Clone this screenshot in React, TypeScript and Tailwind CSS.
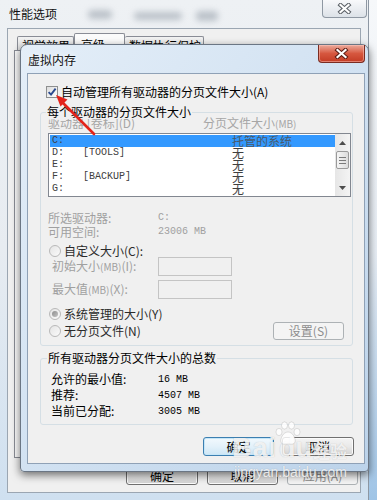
import React from "react";

function XGlyph({ outline }: { outline: string }) {
  return (
    <svg width="15" height="11" viewBox="0 0 15 11">
      <path d="M3.5 2 L11.5 9 M11.5 2 L3.5 9" stroke={outline} strokeWidth="4.2" strokeLinecap="square" fill="none" />
      <path d="M3.5 2 L11.5 9 M11.5 2 L3.5 9" stroke="#ffffff" strokeWidth="2.2" strokeLinecap="square" fill="none" />
    </svg>
  );
}

function Radio({ checked }: { checked?: boolean }) {
  return (
    <div className="w-[12px] h-[12px] shrink-0 rounded-full border border-[#b9b9b9] bg-linear-to-br from-[#e4e4e4] to-[#fbfbfb] flex items-center justify-center">
      {checked && <div className="w-[6px] h-[6px] rounded-full bg-linear-to-br from-[#8d8d8d] to-[#c4c4c4]" />}
    </div>
  );
}

function Btn({ children, w, kind }: { children: React.ReactNode; w: string; kind?: "default" | "disabled" | "normal" }) {
  if (kind === "default") {
    return (
      <div className={`${w} h-[19px] rounded-[3px] border border-[#3c7fb1] bg-linear-to-b from-[#f2f9fd] via-[#e3f1fa] to-[#cde6f5] shadow-[inset_0_0_0_1px_#c5e6f8] flex items-center justify-center leading-none text-[12px] text-black`}>
        {children}
      </div>
    );
  }
  if (kind === "disabled") {
    return (
      <div className={`${w} h-[19px] rounded-[3px] border border-[#adb2b5] bg-[#f4f4f4] flex items-center justify-center leading-none text-[12px] text-[#8c8c8c]`}>
        {children}
      </div>
    );
  }
  return (
    <div className={`${w} h-[19px] rounded-[3px] border border-[#707070] bg-linear-to-b from-[#f4f4f4] via-[#e9e9e9] to-[#d3d3d3] shadow-[inset_0_0_0_1px_#fbfbfb] flex items-center justify-center leading-none text-[12px] text-black`}>
      {children}
    </div>
  );
}

const rows = [
  { d: "C:", l: "", s: "托管的系统", sel: true },
  { d: "D:", l: "[TOOLS]", s: "无" },
  { d: "E:", l: "", s: "无" },
  { d: "F:", l: "[BACKUP]", s: "无" },
  { d: "G:", l: "", s: "无" },
];

export default function App() {
  return (
    <div className="relative w-[377px] h-[500px] overflow-hidden bg-linear-to-b from-[#f6f8fa] via-[#e8eef5] to-[#9fc4e6] font-['Noto_Sans_CJK_SC','Noto_Sans',sans-serif] text-[12px] text-black">
      {/* Outer window: 性能选项 */}
      <div className="w-[369px] h-[500px] flex flex-col bg-linear-to-b from-[#eef1f4] via-[#e7ecf1] to-[#cfe0f0] border-r border-[#8d97a3]">
        <div className="relative h-[28px] flex items-start justify-between">
          <span className="mt-[6px] ml-[9px] leading-[16px] text-[12px] text-[#111]">性能选项</span>
          <div className="absolute left-[88px] top-[10px] w-[24px] h-[9px] rounded bg-[#9aa3ad] blur-[3px] opacity-60" />
          <div className="absolute left-[134px] top-[12px] w-[48px] h-[8px] rounded bg-[#9aa3ad] blur-[3px] opacity-60" />
          <div className="absolute left-[196px] top-[11px] w-[22px] h-[10px] rounded bg-[#9aa3ad] blur-[3px] opacity-60" />
          <div className="mr-[1px] w-[45px] h-[18px] rounded-b-[4px] border border-t-0 border-[#8f98a3] bg-linear-to-b from-[#f8f9fb] to-[#dde2e8] flex items-center justify-center">
            <XGlyph outline="#5b6066" />
          </div>
        </div>
        <div className="flex-1 mx-[7px] flex flex-col bg-[#f0f0f0] border border-[#9ba6b2] pl-[6px] pr-[2px] pt-[4px] pb-[7px]">
          <div className="flex items-end h-[17px] pl-[3px]">
            <div className="w-[57px] h-[14px] border border-b-0 border-[#898c95] rounded-t-[2px] bg-linear-to-b from-[#f3f3f3] to-[#e0e0e0] pl-[4px] pt-[2px] leading-[14px] overflow-hidden">视觉效果</div>
            <div className="w-[51px] h-[17px] border border-b-0 border-[#898c95] rounded-t-[2px] bg-[#fbfbfb] pl-[6px] pt-[4px] leading-[14px] overflow-hidden">高级</div>
            <div className="w-[79px] h-[14px] border border-b-0 border-l-0 border-[#898c95] rounded-t-[2px] bg-linear-to-b from-[#f3f3f3] to-[#e0e0e0] pl-[4px] pt-[2px] leading-[14px] overflow-hidden">数据执行保护</div>
          </div>
          <div className="h-[408px] bg-[#fafafa] border border-[#898c95]" />
          <div className="mt-[8px] flex justify-end gap-[9px]">
            <Btn w="w-[72px]">确定</Btn>
            <Btn w="w-[71px]">取消</Btn>
            <Btn w="w-[71px]" kind="disabled">应用(A)</Btn>
          </div>
        </div>
        <div className="h-[7px]" />
      </div>

      {/* Inner dialog: 虚拟内存 */}
      <div className="absolute left-[20px] top-[44px] w-[349px] h-[428px] flex flex-col rounded-t-[7px] rounded-b-[4px] border border-[#6b7684] bg-linear-to-br from-[#e4eef8] via-[#d2e2f2] to-[#bcd3ea] shadow-[0_3px_9px_rgba(0,0,0,0.55)]">
        <div className="h-[28px] flex justify-between">
          <span className="self-center ml-[7px] mt-[1px] leading-[16px] text-[12px] text-[#111] [text-shadow:0_0_6px_#ffffff]">虚拟内存</span>
          <div className="mr-[3px] w-[47px] h-[18px] rounded-b-[4px] border border-t-0 border-[#7a2c22] bg-linear-to-b from-[#eaa99b] via-[#d6573f] to-[#c33b24] shadow-[inset_0_0_0_1px_rgba(255,200,190,0.5)] flex items-center justify-center">
            <XGlyph outline="#5a1d15" />
          </div>
        </div>
        <div className="ml-[6px] mr-[3px] h-[391px] bg-[#f0f0f0] border border-[#8fa1b6] flex flex-col">
          {/* checkbox */}
          <div className="mt-[12px] ml-[18px] h-[12px] flex items-center gap-[3px]">
            <div className="w-[12px] h-[12px] border border-[#8e8f8f] bg-linear-to-br from-[#dcdcdc] to-[#ffffff] flex items-center justify-center">
              <svg width="10" height="10" viewBox="0 0 10 10">
                <path d="M1.6 5.2 L4 7.6 L8.6 1.6" stroke="#2b4a8f" strokeWidth="1.9" fill="none" />
              </svg>
            </div>
            <span className="leading-[14px]">自动管理所有驱动器的分页文件大小(A)</span>
          </div>

          {/* group 1 */}
          <div className="relative mt-[14px] ml-[12px] w-[313px] rounded-[3px] border border-[#d5dfe5] pt-[3px] pl-[7px] pb-[5px] flex flex-col">
            <span className="absolute -top-[8px] left-[5px] px-[1px] bg-[#f0f0f0] leading-[14px]">每个驱动器的分页文件大小</span>
            <div className="h-[14px] flex leading-[14px] text-[#a6a6a6]">
              <span className="w-[155px]">驱动器 [卷标](D)</span>
              <span>分页文件大小<span className="text-[10px]">(MB)</span></span>
            </div>
            <div className="mt-[3px] w-[303px] h-[64px] border border-[#828790] bg-white flex">
              <div className="flex-1 pl-[1px] pt-[1px] flex flex-col">
                {rows.map((r) => (
                  <div key={r.d} className={`h-[12px] flex items-center leading-[12px] text-[#404040] ${r.sel ? "bg-[#3399ff]" : ""}`}>
                    <span className="w-[33px] pl-[2px] font-['Liberation_Mono',monospace] text-[10px]">{r.d}</span>
                    <span className="w-[149px] font-['Liberation_Mono',monospace] text-[10px]">{r.l}</span>
                    <span className={`text-[12px] ${r.sel ? "text-[#4a5a6a]" : ""}`}>{r.s}</span>
                  </div>
                ))}
              </div>
              <div className="w-[15px] flex flex-col bg-linear-to-r from-[#e6e6e6] to-[#f4f4f4]">
                <div className="h-[17px] flex items-center justify-center">
                  <svg width="7" height="4" viewBox="0 0 7 4"><path d="M0 4 L3.5 0 L7 4 Z" fill="#4d4d4d" /></svg>
                </div>
                <div className="mx-[1px] h-[18px] rounded-[2px] border border-[#9a9a9a] bg-linear-to-r from-[#f5f5f5] to-[#dcdcdc] flex flex-col items-center justify-center gap-[2px]">
                  <div className="w-[7px] h-[1px] bg-[#7a7a7a]" />
                  <div className="w-[7px] h-[1px] bg-[#7a7a7a]" />
                  <div className="w-[7px] h-[1px] bg-[#7a7a7a]" />
                </div>
                <div className="flex-1" />
                <div className="h-[17px] flex items-center justify-center">
                  <svg width="7" height="4" viewBox="0 0 7 4"><path d="M0 0 L3.5 4 L7 0 Z" fill="#4d4d4d" /></svg>
                </div>
              </div>
            </div>
            <div className="mt-[14px] h-[14px] flex leading-[14px] text-[#a0a0a0]">
              <span className="w-[110px]">所选驱动器:</span>
              <span className="font-['Liberation_Mono',monospace] text-[10px]">C:</span>
            </div>
            <div className="h-[14px] flex leading-[14px] text-[#a0a0a0]">
              <span className="w-[110px]">可用空间:</span>
              <span className="font-['Liberation_Mono',monospace] text-[10px]">23006 MB</span>
            </div>
            <div className="mt-[6px] ml-[1px] h-[12px] flex items-center gap-[3px]">
              <Radio />
              <span className="leading-[14px] text-[#2a2a2a]">自定义大小(C):</span>
            </div>
            <div className="ml-[4px] h-[19px] flex items-center">
              <span className="w-[106px] leading-[14px] text-[#a0a0a0]">初始大小<span className="text-[10px]">(MB)</span>(I):</span>
              <div className="w-[74px] h-[19px] border border-[#c4c4c4] bg-[#f0f0f0]" />
            </div>
            <div className="mt-[4px] ml-[4px] h-[19px] flex items-center">
              <span className="w-[106px] leading-[14px] text-[#a0a0a0]">最大值<span className="text-[10px]">(MB)</span>(X):</span>
              <div className="w-[74px] h-[19px] border border-[#c4c4c4] bg-[#f0f0f0]" />
            </div>
            <div className="mt-[9px] ml-[1px] h-[12px] flex items-center gap-[3px]">
              <Radio checked />
              <span className="leading-[14px] text-[#2a2a2a]">系统管理的大小(Y)</span>
            </div>
            <div className="mt-[2px] ml-[1px] mr-[8px] h-[18px] flex items-center justify-between">
              <div className="flex items-center gap-[3px]">
                <Radio />
                <span className="leading-[14px] text-[#2a2a2a]">无分页文件(N)</span>
              </div>
              <div className="w-[71px] h-[18px] rounded-[3px] border border-[#adb2b5] bg-[#f4f4f4] flex items-center justify-center leading-none text-[#8c8c8c]">设置(S)</div>
            </div>
          </div>

          {/* group 2 */}
          <div className="relative mt-[12px] ml-[12px] w-[313px] rounded-[3px] border border-[#d5dfe5] pt-[12px] pl-[10px] pb-[5px] flex flex-col">
            <span className="absolute -top-[8px] left-[6px] px-[1px] bg-[#f0f0f0] leading-[14px]">所有驱动器分页文件大小的总数</span>
            {[
              ["允许的最小值:", "16 MB"],
              ["推荐:", "4507 MB"],
              ["当前已分配:", "3005 MB"],
            ].map(([a, b]) => (
              <div key={a} className="h-[16px] flex items-center">
                <span className="w-[107px] leading-[14px]">{a}</span>
                <span className="font-['Liberation_Mono',monospace] text-[10px]">{b}</span>
              </div>
            ))}
          </div>

          <div className="mt-[12px] pr-[10px] flex justify-end gap-[8px]">
            <Btn w="w-[71px]" kind="default">确定</Btn>
            <Btn w="w-[72px]">取消</Btn>
          </div>
        </div>
      </div>

      {/* red arrow */}
      <svg className="absolute left-0 top-0 pointer-events-none" width="377" height="500" viewBox="0 0 377 500">
        <line x1="94" y1="134" x2="62" y2="102" stroke="#e3241b" strokeWidth="2.6" strokeLinecap="round" />
        <polygon points="56,95 67.5,99.5 60.5,106.5" fill="#e3241b" />
      </svg>

      {/* watermark */}
      <div className="absolute left-[232px] top-[434px] flex items-end pointer-events-none text-[rgba(255,255,255,0.8)] [text-shadow:0_0_1px_rgba(90,90,90,0.35)]">
        <span className="font-['Liberation_Sans',sans-serif] font-bold text-[27px] leading-[28px] tracking-[1px]">Bai</span>
        <span className="font-['Liberation_Sans',sans-serif] font-bold text-[27px] leading-[28px] ml-[2px]">du</span>
        <span className="text-[17px] leading-[22px] font-bold ml-[1px]">经验</span>
      </div>
      <svg className="absolute left-[274px] top-[421px] pointer-events-none" width="28" height="26" viewBox="0 0 28 26">
        <g fill="rgba(255,255,255,0.82)" stroke="rgba(90,90,90,0.22)" strokeWidth="0.8">
          <ellipse cx="5" cy="11" rx="3" ry="3.6" />
          <ellipse cx="10.5" cy="4.5" rx="3" ry="3.6" />
          <ellipse cx="17.5" cy="4.5" rx="3" ry="3.6" />
          <ellipse cx="23" cy="11" rx="3" ry="3.6" />
          <path d="M14 11 C9 11 6 18 7 21 C8 24 11 23 14 23 C17 23 20 24 21 21 C22 18 19 11 14 11 Z" />
        </g>
      </svg>
      <div className="absolute left-[234px] top-[464px] pointer-events-none font-['Liberation_Sans',sans-serif] text-[14px] leading-[16px] text-[rgba(255,255,255,0.82)] [text-shadow:0_0_1px_rgba(90,90,90,0.4)]">
        jingyan.baidu.com
      </div>
    </div>
  );
}
